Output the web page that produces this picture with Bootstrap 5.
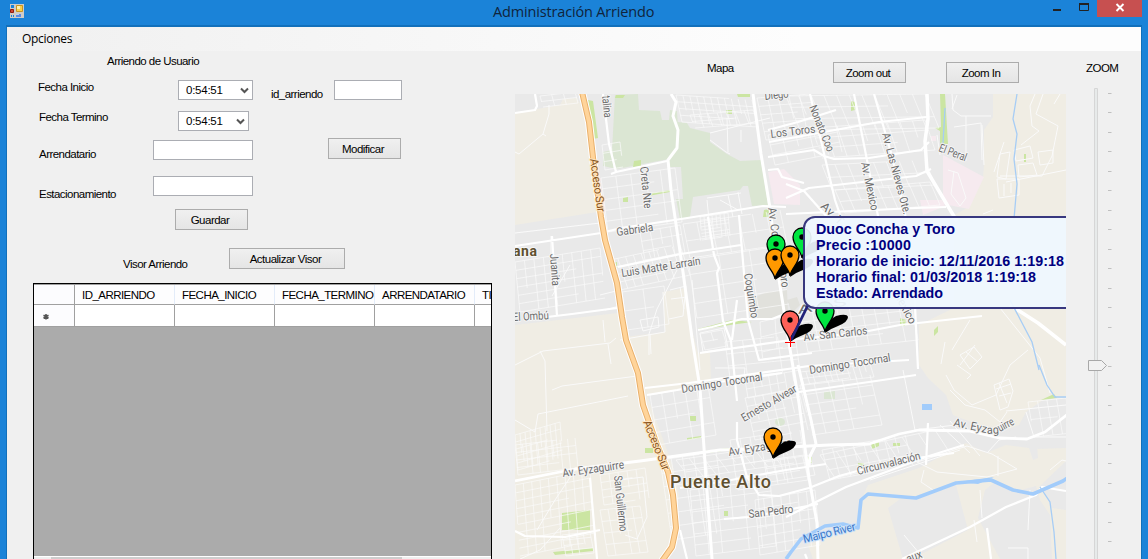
<!DOCTYPE html>
<html lang="es">
<head>
<meta charset="utf-8">
<title>Administración Arriendo</title>
<link href="https://cdn.jsdelivr.net/npm/bootstrap@5.3.0/dist/css/bootstrap.min.css" rel="stylesheet">
<style>
body{height:559px;overflow:hidden;background:#1b83d8;font:11.5px/16px "Liberation Sans",sans-serif;letter-spacing:-.54px;color:#000}
.titlebar{height:26px;padding-left:9px}
.apptitle{font:14.5px/24px "Open Sans",sans-serif;letter-spacing:-.16px;color:#10243c;width:162px;white-space:nowrap;margin-left:469px}
.winbtns{margin-left:auto;height:17px}
.closebtn{width:45px;height:17px;background:#c75050}
.client{margin:0 7px;height:533px;background:#f0f0f0;border-top:1px solid #1270bb;box-shadow:0 0 0 1px #1270bb;overflow:hidden}
.menustrip{height:24px;background:linear-gradient(90deg,#f0f0f0,#fdfdfd 70%);padding-left:15px;font:12px/24px "Open Sans",sans-serif;letter-spacing:-.3px}
.leftpane{width:485px;padding-left:26px}
.mappane{width:551px;margin-left:23px}
.zoompane{width:75px}
.caption-cell{width:120px;white-space:nowrap}
.win-box{height:20px;border:1px solid #abadb3;border-radius:0;background:#fff;padding:0;font-size:11.5px}
.win-btn{height:21px;border:1px solid #acacac;border-radius:0;background:linear-gradient(#f0f0f0,#e5e5e5);padding:1px 3px 0 0;font-size:11.5px;line-height:18px;color:#000;letter-spacing:-.5px}
.w73{width:73px}.w100{width:100px}
.timebox{display:flex;align-items:center;justify-content:space-between;padding:0 3px 0 7px;letter-spacing:-.25px}
.r25{height:25px}.r31{height:31px}.r34{height:34px}.r37{height:37px}.r39{height:39px}.r35{height:35px}.r43{height:43px}
.datagrid{width:459px;height:290px;border:1px solid #000;background:#ababab;overflow:hidden}
.gridrow{width:642px}
.gridrow>div{width:100px;flex:none;height:22px;background:#fff;border-right:1px solid #a0a0a0;border-bottom:1px solid #a0a0a0}
.gridrow>div:first-child{width:41px;background:#fcfcfe}
.gridhead{border-top:1px solid #a0a0a0}
.gridhead>div{height:20px;line-height:20px;padding-left:7px;white-space:nowrap;background:#fdfdfe;border-right-color:#e3ecf9}
.gridhead>div:first-child{border-right-color:#a0a0a0}
.hscroll{height:20px;margin-top:229px;border-top:1px solid #fff;background:#f0f0f0}
.hthumb{margin-left:17px;width:351px;height:18px;background:#cdcdcd}
svg{display:block}
.lbl{font-family:Roboto,sans-serif;font-size:11.5px;letter-spacing:0;fill:#6c6c6c;stroke:#f6f6f6;stroke-width:2px;paint-order:stroke;stroke-linejoin:round}
.tip{font:bold 14.3px "Liberation Sans",sans-serif;letter-spacing:0;fill:#000080}
</style>
</head>
<body>
<header class="titlebar d-flex align-items-start">
  <svg width="15" height="15" viewBox="0 0 15 15" style="margin-top:4px"><path fill="#cfccc8" d="M1 0h14v14H1z"/><path fill="#1b83d8" d="M2 1h3v3H2zM2 11h1v2H2zM4 11h1v2H4z"/><path fill="#fbd04a" stroke="#c9951f" d="M7.500 1.500h6v6h-6z"/><path fill="#fff0b0" d="M8 2h3v3H8z"/><path fill="#d0452f" stroke="#8f1b12" d="M1.500 5.500h3v3h-3z"/><path fill="#5b8ae4" d="M7 10h5v3H7z"/><path fill="#b9d0f6" d="M7 10h3v1H7z"/></svg>
  <div class="apptitle">Administración Arriendo</div>
  <div class="winbtns d-flex">
    <svg width="48" height="17"><path fill="#222" d="M4 9h8v2H4z"/><path d="M30.500 4v6.500h9V4" fill="none" stroke="#222"/><path fill="#222" d="M30 3h10v2H30z"/></svg>
    <div class="closebtn"><svg width="45" height="17"><path d="m19.500 4 7 7m0-7-7 7" stroke="#fff" stroke-width="1.900"/></svg></div>
    <div style="width:6px"></div>
  </div>
</header>
<main class="client">
  <nav class="menustrip">Opciones</nav>
  <div class="d-flex">
    <section class="leftpane flex-shrink-0">
      <div class="r25"><div style="padding:2px 0 0 74px">Arriendo de Usuario</div></div>
      <div class="r31 d-flex align-items-start">
        <div class="caption-cell" style="margin:3px 20px 0 5px">Fecha Inicio</div>
        <div class="win-box timebox" style="width:75px;margin-top:4px">0:54:51<svg width="9" height="7"><path d="m1 1.500 3.500 3.500L8 1.500" fill="none" stroke="#555" stroke-width="2"/></svg></div>
        <div style="width:63px;margin:10px 0 0 18px">id_arriendo</div>
        <input class="form-control win-box" style="width:68px;margin-top:4px" aria-label="id_arriendo">
      </div>
      <div class="r31 d-flex align-items-start">
        <div class="caption-cell" style="margin:2px 19px 0 6px">Fecha Termino</div>
        <div class="win-box timebox" style="width:71px;margin-top:4px">0:54:51<svg width="9" height="7"><path d="m1 1.500 3.500 3.500L8 1.500" fill="none" stroke="#555" stroke-width="2"/></svg></div>
      </div>
      <div class="r34 d-flex align-items-start">
        <div style="width:114px;margin:8px 0 0 6px">Arrendatario</div>
        <input class="form-control win-box w100" style="margin-top:2px" aria-label="Arrendatario">
        <button class="btn win-btn w73" style="margin-left:75px">Modificar</button>
      </div>
      <div class="r37 d-flex align-items-start">
        <div style="width:114px;margin:14px 0 0 6px">Estacionamiento</div>
        <input class="form-control win-box w100" style="margin-top:4px" aria-label="Estacionamiento">
      </div>
      <div class="r39"><button class="btn win-btn w73 d-block" style="margin-left:142px">Guardar</button></div>
      <div class="r35 d-flex align-items-start">
        <div style="width:106px;margin:8px 0 0 90px">Visor Arriendo</div>
        <button class="btn win-btn" style="width:116px">Actualizar Visor</button>
      </div>
      <div class="datagrid">
        <div class="gridrow gridhead d-flex"><div></div><div>ID_ARRIENDO</div><div>FECHA_INICIO</div><div>FECHA_TERMINO</div><div>ARRENDATARIO</div><div>TI</div></div>
        <div class="gridrow d-flex"><div><svg width="40" height="20"><path d="M12 9v5.500M9.500 10.200l5 3m0-3-5 3" stroke="#555" stroke-width="1.600"/></svg></div><div></div><div></div><div></div><div></div><div></div></div>
        <div class="hscroll"><div class="hthumb"></div></div>
      </div>
    </section>
    <section class="mappane flex-shrink-0">
      <div class="r43 d-flex align-items-start">
        <div style="width:126px;margin:9px 0 0 192px">Mapa</div>
        <button class="btn win-btn w73" style="margin-top:11px">Zoom out</button>
        <button class="btn win-btn w73" style="margin:11px 0 0 40px">Zoom In</button>
      </div>
      <svg id="map" width="551" height="465" viewBox="515 94 551 465">
        <path fill="#e9e9e9" d="M515 94h551v465H515z"/>
        <g fill="#f0ede4">
          <path d="m515 113 45-8 3-6 14-1 5 9 10 50 5 55-82 13z"/>
          <path d="m515 325 103-12 7 24 40-5-2-40 23-4 6 42 6 23h12l1 27-1 4-63 11 27 75 5 25-10 64H515z"/>
          <path d="M993 94v23l-9 13v35l-1 13-14 29-15 8v93l-35 17v40l9 13 18 17 7 20 13 5 34 12 19-7 7-13 17-12 23-2V94z"/>
          <path d="m813 559-5-14 50-20 4-27 6-13 51-17 47-25 20 10 20-8 30 4 30-1v111z"/>
        </g>
        <g fill="#e9e9e9">
          <path d="m888 508 12-9h17l39-14 12 45-56 29h-9zM978 518l7-28 10-8 18 10 23-6 4 14 10 15 2 44h-52zM1040 486l26-25v49l-14-2z"/>
          <path d="m986 453 20-20 15-8 15 8 2 25-5 2-5-15-20-6z"/>
        </g>
        <g fill="#dbe6d3">
          <path d="m615 95 23-1 1 16 21 1 2 9h7l1-10 7 1 2 32-10 16-52 10-14-3v-14l9-2z"/>
          <path d="m678 122 9 1 3 5 20 5v9l17 12 13 7 21-1 7 45-16 1-4-20h-5l-3 4-47 7-3 20-10 2-4-20h7l-2-32h-11l-2-10z"/>
          <path d="m824 392 11-1v8h-11z"/>
          <ellipse cx="780" cy="422" rx="5" ry="4"/>
        </g>
        <path fill="#e1e1dc" d="m755 297 12-5 20-2 1 23-12 5-20 1zM787 300l10-3 3 8-8 8z"/>
        <path fill="#f6eaef" d="m768 172 16-3 16 16v20l-26-1zM943 155l41 22-15 32-26-5zM931 136h5v5h-5zM920 200h22l3 6-22 9z"/>
        <g fill="#cbe5a2">
          <path d="m588 100 5 1 5 37-5 1zM616 95h9l-2 3h-8zM737 94h13v3h-12zM726 110h6v4h-6zM634 161l7-1v6l-8 1zM623 198l5-1v5h-5zM647 194l23-4v2l-22 4zM764 210l5-1v8h-6zM940 94h5l3 50-8 2v-15l-5-3 6-1zM851 101l4 1v8l-4 1zM613 263l4-1v13l-2-2zM698 329l34-9 20 2-22 3-31 5zM690 416h6v5h-6zM687 438l14-2v2l-14 2zM645 448h8v5h-8zM705 451l24-3v2l-22 3zM562 513l28-3v20h-28zM553 552l40-4v3l-38 4zM724 511h4v5h-4zM690 479h5v4h-5zM808 457h4v6h-4zM871 443l8-1v4l-7 3zM893 443h7v3h-7zM858 463h6v3h-6zM1041 400l13-6 3 4zM934 330l4-4v6l-4 4zM900 318l6 2-1 6h-5zM1024 154h2v8h-2z"/>
        </g>
        <g id="thin" fill="none" stroke="#fafafa" stroke-width="1">
          <path d="M515 152l4 2 24-20 6-20v-9M543 134l3 2M515 233l85-10M551 236v20M570 265l-18 31M677 270l-20 39-8 25v21M663 292l2 40-45 8M605 310l14-4M600 295l20-5M710 140l16 12 4 2M710 133l60-15M727 118l1 34M741 130v12M515 365l28-14 67-8 6-5M540 351l5 10 2 70M603 320l2 22M608 344l3 20M650 334l1 20M692 280l8 90M552 390l10-4 75-10M515 420l20 12 3-18 90-18M620 480l23-3 4 40-10 22-12-4M560 528l-20 22-20 9M575 470l-20 30-18 30"/>
          <path d="M952 94l1 16 8 6h30M957 95l-5 14M966 116v45M954 127l27-4 1 37M940 155l-3-20M948 170l10 3 8 25-6 8-9-12 3-23M984 165l-2-40M1035 94l-5 12 2 20 7 5-18 14M1043 94l-7 20 22 12-6 30-10 20h-42M1004 142l-10 30M1066 170l-60 12M1060 94l-6 10M993 210l-10 4M945 342l-4 22M970 320l-18 30M1000 308l40 50 10 35M1028 350l-18 15-14 30-24 10-18-15-8-15M950 390l15 15 20 5 15 12 7-10M1026 412l8 25h32M1066 405l-60 6M917 462l20 10 50 5 30-8-25-15-25-8zM987 453l12-13 17-3M998 456v20M924 470l-3 12 12 8M903 370l12 60 40-5M940 425l30 28M950 421l30 35M960 450l-90 30M1030 490l-2 40M980 490l2 28M1008 548h20v11M1050 470l12-10 4 1M904 535l20 24M974 520l3 22"/>
          <path d="M670 290l16-4-3 30-14 3M671 299l16-2M680 287l4 22M640 320l18-3 1 10-16 4zM700 333l24-5 4 20-25 4zM715 368h30l-2 16M707 198l34-5M720 200l18 10M707 200l2 20M728 195l5 22M738 192l4 22M1000 154l10-2-4 27-9-2zM1014 150l16-4 3 12-17 3zM1018 165l15-2 4 12-18 2zM1038 152l15-2v13l-13 2zM997 179h22v16l-20 3zM1004 184v12M1011 183v10"/>
          <path d="M994 385l15-6 4 12-5 16-8 3zM999 383l8 20M996 389l15-5M999 396l12-3M960 355l14-8 8 10-12 12zM966 352l12 10M975 345l-15 20M957 365l14 10-4 4"/>
        </g>
        <g fill="none" stroke="#fff" stroke-width="2.200" stroke-linejoin="round">
          <path d="M515 113l20-3 2-4-2-12M603 94l6 50 7 28 51-11M616 172l-5 2"/>
          <path d="M671 94l5 8-3 14 5 14-1 18-9 12 3 30 12 82 9 66 8 50 6 90 7 94" stroke-width="3"/>
          <path d="M552 236l5 80M515 246l86-13 20-5 60-9 82-13 23 1M530 319l42-5 45-6M618 267l63-13 60-9M708 217l6 38 5 13-2 5 6 48 8 20 6 60M739 215l9 105 11 40 53-7M698 330l14-3 30-8h30l10-4M700 353l98-14 60-6 42-8 82-9M647 395l30-5 35-7 70-10M645 388l44-5 120-17 100-6M737 300l-5 40"/>
          <path d="M753 94l8 60 9 54 8 65 11 70 10 60 10 75 8 45 1 37-12 20 3 39M798 365l13 55 5 24-6 12-1 10" stroke-width="3"/>
          <path d="M810 94l25 106 12 35M854 94l24 122 8 80M874 94l18 62 13 58 8 50 5 105M769 142l110-20 48-5M768 157l46-7 10 6 10 3 35-1 52-8 8-8M786 198l23-10 107-12 15-7M786 184l18 7 24 27M786 214l130-6 30-1M768 130l30-8 38-12M768 170l10-1 4 8 22 6"/>
          <path d="M515 481l60-12 65-8 22-3 58-8 49-2 60-3 40-1 30-10 20-4 50 1 30 7 28 1 18-7 28-22 14-10 15-30" stroke-width="2.800"/>
          <path d="M927 94l1 25-3 22 2 30 25 42 5 8M1010 305l28 18 28 22" stroke-width="3.500"/>
          <path d="M590 478l7 81M515 531l10 5 40 1 35-7M680 530l7 29M680 488l40-6 66-12 40-6M737 422v18l10 37 12 18 20 1 30-8 30-12 55-15 60-8M724 519l26-2 68-13M786 394l20-3 70-10 40-6M786 517l20-10 40-20 80-30 38-12M928 423l-2 42M902 559l68-32 36-20 30-12 6-8 24 4M987 528l4 31M807 559l-2-5"/>
        </g>
        <path d="M1017 94l-4 25 4 15-3 25 3 25-3 35M945 108l-2 35M1010 300l22 42 7 28M1039 365l8 20 8 12h11M1040 487l10 15 4 30 2 27" fill="none" stroke="#a7cdf5" stroke-width="1.300"/>
        <path d="m786 559 5-7 10-13 24-13 18-2 15 4 3-28 7-6 48 4 40-15 35-3 22 10 20 4 30-13 23-16" fill="none" stroke="#a2ccfb" stroke-width="3.600" stroke-linejoin="round"/>
        <path fill="#a2ccfb" d="M922 404h10v6h-10zM958 482l36-5-16 7z"/>
        <g fill="none" stroke-linejoin="round">
          <path d="M582 92 589 122 595 175 601 217 605 240 617 283 622 317 626 340 638 373 643 405 657 445 668 472 673 495 676 528 672 547 662 561" stroke="#fff" stroke-width="8"/>
          <path d="M582 92 589 122 595 175 601 217 605 240 617 283 622 317 626 340 638 373 643 405 657 445 668 472 673 495 676 528 672 547 662 561" stroke="#e9b06b" stroke-width="6"/>
          <path d="M582 92 589 122 595 175 601 217 605 240 617 283 622 317 626 340 638 373 643 405 657 445 668 472 673 495 676 528 672 547 662 561" stroke="#ffd49a" stroke-width="4"/>
        </g>
        <g id="labels"></g>
        <g id="pins"></g>
        <path d="m808 305-17 35" fill="none" stroke="#22227a" stroke-width="2.800"/>
        <rect x="804" y="217" width="290" height="91" rx="11" fill="#eff7ff" fill-opacity=".93" stroke="#38387f" stroke-width="2"/>
        <path d="M785 342.500h10M790.500 337v10" stroke="#f00"/>
        <g class="tip">
          <text x="816" y="234" textLength="139">Duoc Concha y Toro</text>
          <text x="816" y="250" textLength="95">Precio :10000</text>
          <text x="816" y="266" textLength="248">Horario de inicio: 12/11/2016 1:19:18</text>
          <text x="816" y="282" textLength="220">Horario final: 01/03/2018 1:19:18</text>
          <text x="816" y="298" textLength="127">Estado: Arrendado</text>
        </g>
      </svg>
    </section>
    <section class="zoompane flex-shrink-0">
      <div style="height:37px;padding:9px 0 0 20px">ZOOM</div>
      <svg id="slider" width="75" height="471" viewBox="1066 88 75 471"><path d="M1094.500 88.500h3V560h-3z" fill="#e7eaea" stroke="#d6d6d6"/><path d="M1088.500 360.500h13l5 5-5 5h-13z" fill="#f1f1f1" stroke="#a8a8a8"/></svg>
    </section>
  </div>
</main>
<script src="https://cdn.jsdelivr.net/npm/bootstrap@5.3.0/dist/js/bootstrap.bundle.min.js"></script>
<script>
const NS='http://www.w3.org/2000/svg';
function add(parent,name,attrs,text){
  const e=document.createElementNS(NS,name);
  for(const k in attrs)e.setAttribute(k,attrs[k]);
  if(text)e.textContent=text;
  document.getElementById(parent).appendChild(e);
}
// Blocks of side streets: top-left, top-right and bottom-left corner, columns, rows
[[540,96,575,92,543,107,3,2],[601,178,675,168,608,232,5,5],[602,145,620,142,605,170,2,3],[676,95,752,100,682,122,11,4],
[690,115,753,110,695,128,7,2],[757,98,810,94,766,140,5,5],[768,135,835,122,775,165,5,3],[786,96,925,94,800,130,11,3],[812,128,925,120,822,158,9,3],[822,165,925,160,832,190,8,2],[835,190,930,182,845,213,9,2],
[515,262,600,248,520,312,9,6],[610,260,680,245,620,290,9,4],[622,292,664,286,627,330,2,2],[640,232,680,225,645,260,4,3],[683,224,780,210,690,258,7,2],[700,217,728,213,702,240,7,7],[688,260,780,246,697,318,3,4],
[725,342,795,335,730,378,4,3],[700,334,722,330,705,350,2,2],[760,322,790,315,762,352,2,2],[800,312,910,300,808,352,9,4],[745,380,800,370,748,398,7,2],[745,398,798,388,755,440,6,5],[800,385,870,375,812,435,5,5],[800,372,870,364,804,385,12,2],[650,395,708,385,658,445,5,4],[660,460,716,452,672,540,5,6],[676,460,780,445,690,478,8,3],[690,490,770,480,696,556,6,6],[730,440,800,430,738,490,7,4],[755,500,815,490,760,555,7,6],[765,462,810,455,770,482,6,3],[822,450,905,435,830,480,8,3],[820,455,935,430,835,478,7,1],
[515,435,560,422,518,470,9,5],[515,485,590,470,520,556,9,9],[600,475,645,468,604,505,5,4],[600,510,640,506,608,556,5,4],[515,445,575,438,518,475,8,4],[1028,402,1066,398,1034,437,4,2],[562,535,590,532,566,556,4,4]
].forEach(([a,b,c,d,e,f,n,m],q)=>{
  let p='';
  for(let i=0;i<=n;i++){const t=i/n,h=(i*7+q*3)%4===0?.55:1,x=a+(c-a)*t,y=b+(d-b)*t;p+=`M${x} ${y}l${(e-a)*h} ${(f-b)*h}`}
  for(let j=0;j<=m;j++){const t=j/m,h=(j*5+q)%3===0?.7:1,x=a+(e-a)*t,y=b+(f-b)*t;p+=`M${x} ${y}l${(c-a)*h} ${(d-b)*h}`}
  add('thin','path',{d:p,opacity:.68});
});
// Street names: x, y, angle, length, text
[[602,96,84,22,'talina'],[640,167,84,42,'Creta Nte'],[617,236,-8,37,'Gabriela'],[622,277,-9,80,'Luis Matte Larraín'],[765,100,-6,24,'Diego'],
[771,138,-7,45,'Los Toros'],[809,107,68,49,'Nonato Coo'],[882,134,75,84,'Av. Las Nieves Ote.'],[861,163,78,49,'Av. Mexico'],[938,151,21,29,'El Peral'],
[820,207,44,27,'Av. T'],[768,208,82,53,'Av. Concha'],[550,254,86,32,'Juanita'],[513,321,-3,36,'El Ombú'],[744,274,81,45,'Coquimbo'],[779,267,82,21,'Toro'],
[682,393,-9,82,'Domingo Tocornal'],[744,422,-30,62,'Ernesto Alvear'],[804,341,-6,64,'Av. San Carlos'],[810,374,-9,82,'Domingo Tocornal'],[798,314,-10,50,'Av. S'],[893,293,62,36,'Mexico'],
[563,477,-8,62,'Av. Eyzaguirre'],[729,456,-9,64,'Av. Eyzaguirre'],[953,426,12,34,'Av. Eyz'],[987,434,-3,12,'ag'],[1000,432,-28,17,'uirre'],[858,475,-14,65,'Circunvalación'],
[614,476,84,56,'San Guillermo'],[749,518,-7,45,'San Pedro'],[908,563,-21,16,'aux']
].forEach(([x,y,r,l,t])=>add('labels','text',{class:'lbl',transform:`translate(${x} ${y}) rotate(${r})`,textLength:l,lengthAdjust:'spacingAndGlyphs'},t));
[[590,159,82,54],[643,422,68,53]].forEach(([x,y,r,l])=>add('labels','text',{class:'lbl',style:'fill:#8a5520;stroke:#ffe6c2',transform:`translate(${x} ${y}) rotate(${r})`,textLength:l},'Acceso Sur'));
add('labels','text',{class:'lbl',style:'fill:#3c78c8;stroke:#c8e0fb',transform:'translate(804 543) rotate(-14)',textLength:54},'Maipo River');
add('labels','text',{class:'lbl',style:'font-size:18px;font-weight:500;fill:#5f5030',x:670,y:488,textLength:101},'Puente Alto');
add('labels','text',{class:'lbl',style:'font-size:14px;font-weight:700;fill:#5f5030',x:513,y:256,textLength:24},'ana');
// Car park markers: head centre and colour
const pins=[[776,244,'#00e640'],[802,237,'#00e640'],[775,258,'#ff9900'],[790,255,'#ff9900'],[825,311,'#00e640'],[790,320,'#fe6158'],[773,437,'#ff9900']];
pins.forEach(([x,y,c])=>{
  add('pins','path',{d:`M${x} ${y+22}q2-13 11-17 11-3 12 1 0 5-10 9-6 2-13 7z`,fill:'#000'});
  add('pins','path',{d:`M${x} ${y+21}c-1-8-9-12-9-21a9 9 0 0 1 18 0c0 9-8 13-9 21z`,fill:c,stroke:'#000','stroke-width':1.3});
  add('pins','circle',{cx:x,cy:y,r:2.7,fill:'#000'});
});
for(let i=0;i<24;i++)add('slider','path',{d:`M1108 ${Math.round(93+i*19.48)+.5}h3.500`,stroke:'#c0c0c0'});
</script>
</body>
</html>
